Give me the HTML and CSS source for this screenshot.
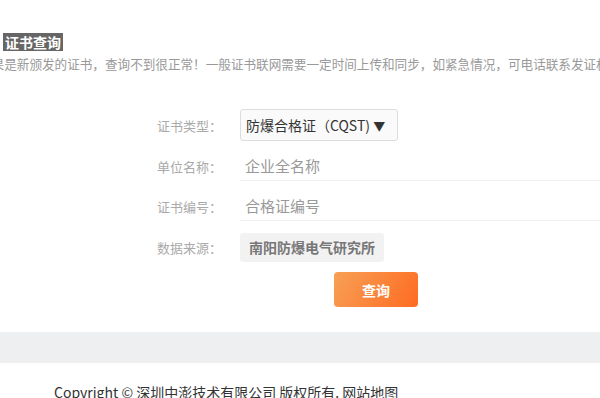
FILE: index.html
```html
<!DOCTYPE html>
<html lang="zh-CN">
<head>
<meta charset="utf-8">
<title>证书查询</title>
<link rel="stylesheet" href="styles.css">
</head>
<body>
<div class="main">
  <div class="head">
    <span class="title">证书查询</span>
  </div>
  <p class="notice">如果是新颁发的证书，查询不到很正常！一般证书联网需要一定时间上传和同步，如紧急情况，可电话联系发证机构</p>
  <div class="form">
    <div class="row">
      <span class="label">证书类型：</span>
      <div class="select">防爆合格证（CQST) <span class="arrow">▼</span></div>
    </div>
    <div class="row">
      <span class="label">单位名称：</span>
      <div class="input">企业全名称</div>
    </div>
    <div class="row">
      <span class="label">证书编号：</span>
      <div class="input">合格证编号</div>
    </div>
    <div class="row row-src">
      <span class="label">数据来源：</span>
      <div class="source">南阳防爆电气研究所</div>
    </div>
    <div class="row row-btn">
      <span class="label"></span>
      <button class="btn">查询</button>
    </div>
  </div>
</div>
<div class="band"></div>
<div class="footer">Copyright © 深圳中澎技术有限公司 版权所有. 网站地图</div>
</body>
</html>
```
FILE: styles.css
```css
html, body {
  margin: 0;
  padding: 0;
  background: #fff;
  overflow: hidden;
}
body {
  width: 600px;
  font-family: "Noto Sans CJK SC", "Noto Sans", sans-serif;
}
.main {
  height: 332px;
  overflow: hidden;
}
.head {
  padding: 29px 0 0 3px;
  height: 18px;
}
.title {
  display: inline-block;
  background: #666;
  color: #fff;
  font-weight: bold;
  font-size: 14px;
  line-height: 18px;
  height: 18px;
  padding: 0 2px;
}
.notice {
  margin: 7px 0 0 -21px;
  font-size: 12.6px;
  line-height: 20px;
  color: #999;
  white-space: nowrap;
}
.form {
  margin-top: 35px;
  display: flex;
  flex-direction: column;
  gap: 10px;
}
.row {
  display: flex;
  align-items: center;
  gap: 18px;
}
.label {
  width: 222px;
  text-align: right;
  font-size: 13px;
  color: #aaa;
  flex: none;
}
.select {
  box-sizing: border-box;
  width: 158px;
  height: 32px;
  border: 1px solid #ddd;
  border-radius: 3px;
  background: #fafafa;
  padding: 0 5px;
  font-size: 14px;
  line-height: 30px;
  color: #333;
  white-space: nowrap;
}
.arrow {
  font-size: 12px;
  color: #333;
}
.input {
  flex: 1;
  height: 30px;
  line-height: 30px;
  border-bottom: 1px solid #efefef;
  box-sizing: border-box;
  padding-left: 5px;
  font-size: 15px;
  color: #999;
}
.row-src {
  margin-top: 2px;
}
.source {
  height: 29px;
  line-height: 29px;
  padding: 0 9px;
  background: #f2f2f2;
  border-radius: 3px;
  font-size: 14px;
  font-weight: bold;
  color: #777;
}
.row-btn .label {
  width: 316px;
}
.btn {
  width: 84px;
  height: 35px;
  border: 0;
  border-radius: 4px;
  background: linear-gradient(120deg, #f7a055 0%, #fe6b22 100%);
  color: #fff;
  font-family: "Noto Sans CJK SC", sans-serif;
  font-size: 14px;
  font-weight: bold;
  padding: 0;
}
.band {
  height: 31px;
  background: #eeeff1;
}
.footer {
  padding: 19px 0 0 54px;
  font-size: 14px;
  line-height: 20px;
  color: #333;
  white-space: nowrap;
}
```
